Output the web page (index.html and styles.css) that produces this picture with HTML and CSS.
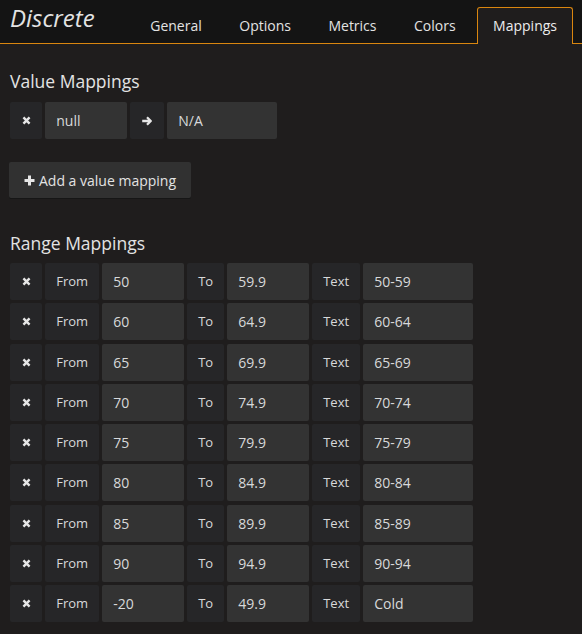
FILE: index.html
```html
<!DOCTYPE html>
<html>
<head>
<meta charset="utf-8">
<link rel="stylesheet" href="styles.css">
</head>
<body>
<div class="header">
  <div class="title">Discrete</div>
  <ul class="tabs">
    <li class="tab">General</li>
    <li class="tab">Options</li>
    <li class="tab">Metrics</li>
    <li class="tab">Colors</li>
    <li class="tab active">Mappings</li>
  </ul>
</div>
<div class="content">
  <h5 class="section-heading first">Value Mappings</h5>
  <div class="form-row">
    <span class="label w-icon"><svg class="ico-x" viewBox="0 0 10 10"><path d="M1.6 1.6 L8.4 8.4 M8.4 1.6 L1.6 8.4"/></svg></span>
    <span class="input w-null">null</span>
    <span class="label w-arrow"><svg class="ico-arrow" viewBox="0 0 12 10"><path d="M1.2 5 H9.6 M6 1.3 L9.8 5 L6 8.7"/></svg></span>
    <span class="input w-text">N/A</span>
  </div>
  <button class="btn"><svg class="ico-plus" viewBox="0 0 11 11"><path d="M5.5 0.5 V10.5 M0.5 5.5 H10.5"/></svg>Add a value mapping</button>
  <h5 class="section-heading second">Range Mappings</h5>
  <div class="range-list">
    <div class="form-row"><span class="label w-icon"><svg class="ico-x" viewBox="0 0 10 10"><path d="M1.6 1.6 L8.4 8.4 M8.4 1.6 L1.6 8.4"/></svg></span><span class="label small w-from">From</span><span class="input w-num">50</span><span class="label small w-to">To</span><span class="input w-num">59.9</span><span class="label small w-tx">Text</span><span class="input w-text">50-59</span></div>
    <div class="form-row"><span class="label w-icon"><svg class="ico-x" viewBox="0 0 10 10"><path d="M1.6 1.6 L8.4 8.4 M8.4 1.6 L1.6 8.4"/></svg></span><span class="label small w-from">From</span><span class="input w-num">60</span><span class="label small w-to">To</span><span class="input w-num">64.9</span><span class="label small w-tx">Text</span><span class="input w-text">60-64</span></div>
    <div class="form-row"><span class="label w-icon"><svg class="ico-x" viewBox="0 0 10 10"><path d="M1.6 1.6 L8.4 8.4 M8.4 1.6 L1.6 8.4"/></svg></span><span class="label small w-from">From</span><span class="input w-num">65</span><span class="label small w-to">To</span><span class="input w-num">69.9</span><span class="label small w-tx">Text</span><span class="input w-text">65-69</span></div>
    <div class="form-row"><span class="label w-icon"><svg class="ico-x" viewBox="0 0 10 10"><path d="M1.6 1.6 L8.4 8.4 M8.4 1.6 L1.6 8.4"/></svg></span><span class="label small w-from">From</span><span class="input w-num">70</span><span class="label small w-to">To</span><span class="input w-num">74.9</span><span class="label small w-tx">Text</span><span class="input w-text">70-74</span></div>
    <div class="form-row"><span class="label w-icon"><svg class="ico-x" viewBox="0 0 10 10"><path d="M1.6 1.6 L8.4 8.4 M8.4 1.6 L1.6 8.4"/></svg></span><span class="label small w-from">From</span><span class="input w-num">75</span><span class="label small w-to">To</span><span class="input w-num">79.9</span><span class="label small w-tx">Text</span><span class="input w-text">75-79</span></div>
    <div class="form-row"><span class="label w-icon"><svg class="ico-x" viewBox="0 0 10 10"><path d="M1.6 1.6 L8.4 8.4 M8.4 1.6 L1.6 8.4"/></svg></span><span class="label small w-from">From</span><span class="input w-num">80</span><span class="label small w-to">To</span><span class="input w-num">84.9</span><span class="label small w-tx">Text</span><span class="input w-text">80-84</span></div>
    <div class="form-row"><span class="label w-icon"><svg class="ico-x" viewBox="0 0 10 10"><path d="M1.6 1.6 L8.4 8.4 M8.4 1.6 L1.6 8.4"/></svg></span><span class="label small w-from">From</span><span class="input w-num">85</span><span class="label small w-to">To</span><span class="input w-num">89.9</span><span class="label small w-tx">Text</span><span class="input w-text">85-89</span></div>
    <div class="form-row"><span class="label w-icon"><svg class="ico-x" viewBox="0 0 10 10"><path d="M1.6 1.6 L8.4 8.4 M8.4 1.6 L1.6 8.4"/></svg></span><span class="label small w-from">From</span><span class="input w-num">90</span><span class="label small w-to">To</span><span class="input w-num">94.9</span><span class="label small w-tx">Text</span><span class="input w-text">90-94</span></div>
    <div class="form-row"><span class="label w-icon"><svg class="ico-x" viewBox="0 0 10 10"><path d="M1.6 1.6 L8.4 8.4 M8.4 1.6 L1.6 8.4"/></svg></span><span class="label small w-from">From</span><span class="input w-num">-20</span><span class="label small w-to">To</span><span class="input w-num">49.9</span><span class="label small w-tx">Text</span><span class="input w-text">Cold</span></div>
  </div>
</div>
</body>
</html>
```

FILE: styles.css
```css
* { box-sizing: border-box; }
html, body {
  margin: 0;
  padding: 0;
  background: #1f1d1d;
  color: #d8d9da;
  font-family: "Open Sans", "Liberation Sans", sans-serif;
  height: 100%;
}
.header {
  display: flex;
  align-items: flex-end;
  height: 44px;
  background: #141414;
  border-bottom: 1px solid #d9860f;
}
.title {
  align-self: flex-start;
  margin-top: 3px;
  margin-left: 10px;
  font-size: 24px;
  line-height: 30px;
  font-style: italic;
  color: #e3e3e3;
}
.tabs {
  display: flex;
  gap: 5.5px;
  list-style: none;
  margin: 0 9px -1px auto;
  padding: 0;
}
.tab {
  padding: 0 15px;
  line-height: 36px;
  font-size: 14px;
  color: #e3e3e3;
  border: 1px solid transparent;
  border-bottom: none;
  border-radius: 3px 3px 0 0;
}
.tab.active {
  background: #1f1d1d;
  border-color: #d9860f;
  color: #ececec;
}
.content {
  padding: 0 10px;
}
.section-heading {
  margin: 0;
  font-size: 17.5px;
  line-height: 22px;
  font-weight: 400;
  color: #e3e3e3;
}
.section-heading.first {
  margin-top: 26px;
  margin-bottom: 10px;
}
.section-heading.second {
  margin-top: 34px;
  margin-bottom: 9px;
}
.form-row {
  display: flex;
  gap: 3.25px;
  height: 37px;
}
.range-list {
  display: flex;
  flex-direction: column;
  gap: 3.25px;
}
.label, .input {
  display: flex;
  align-items: center;
  height: 100%;
  border-radius: 2px;
  font-size: 14px;
}
.label {
  background: #262628;
  justify-content: center;
  color: #d8d9da;
}
.label.small {
  font-size: 13px;
  padding-bottom: 1px;
}
.input {
  background: #333333;
  padding-left: 11px;
  color: #d8d9da;
}
.w-icon { width: 32px; }
.w-null { width: 81.75px; }
.w-arrow { width: 33.75px; }
.w-text { width: 109.75px; }
.w-from { width: 53.75px; }
.w-num { width: 81.75px; }
.w-to { width: 36.75px; }
.w-tx { width: 47.75px; }
.ico-x {
  width: 9px;
  height: 9px;
  fill: none;
  stroke: #e6e6e6;
  stroke-width: 2.7;
}
.ico-arrow {
  width: 12px;
  height: 10px;
  fill: none;
  stroke: #e6e6e6;
  stroke-width: 2.3;
  stroke-linejoin: round;
}
.btn {
  display: flex;
  align-items: center;
  margin-top: 23px;
  margin-left: -1px;
  height: 36px;
  padding: 0 15px;
  background: #313131;
  border: none;
  border-radius: 2px;
  box-shadow: 0 1px 0 #161616;
  color: #e3e3e3;
  font-family: "Open Sans", "Liberation Sans", sans-serif;
  font-size: 14px;
}
.ico-plus {
  width: 11px;
  height: 11px;
  margin-right: 4px;
  fill: none;
  stroke: #e6e6e6;
  stroke-width: 3;
}
```
